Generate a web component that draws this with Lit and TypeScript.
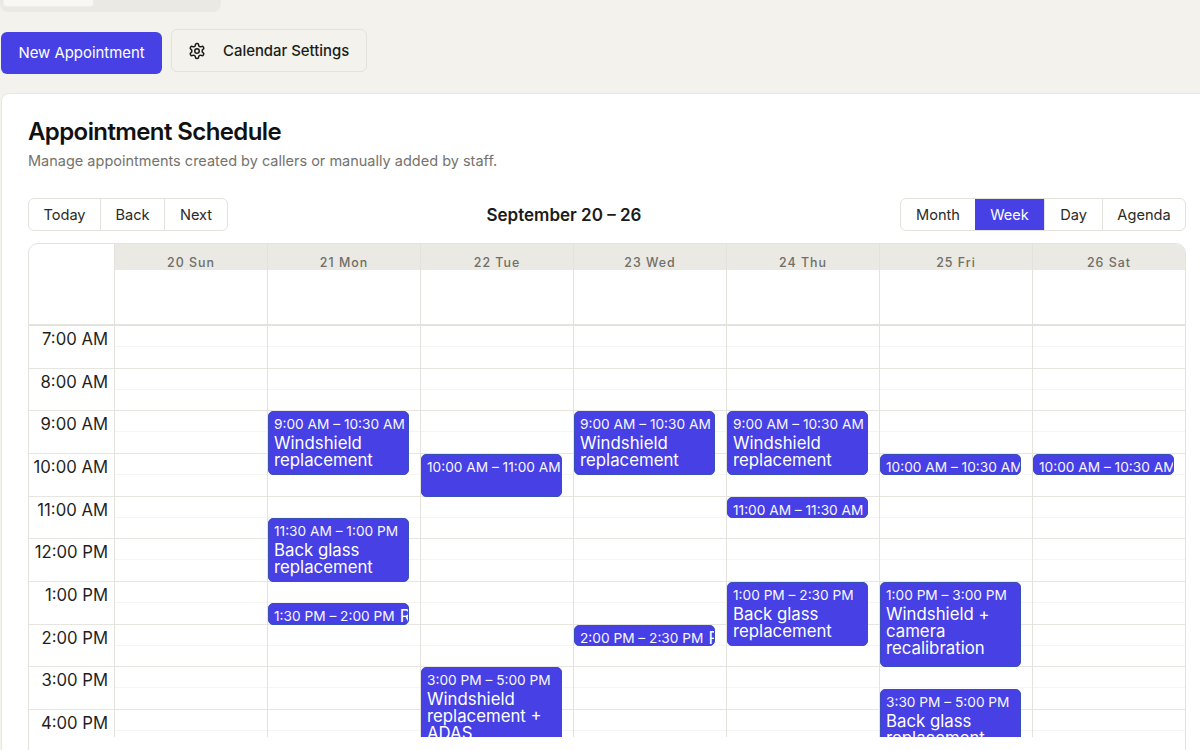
import { LitElement, html, css } from "lit";
import { customElement } from "lit/decorators.js";

const HOUR = 42.66;
const hours = ["7:00 AM","8:00 AM","9:00 AM","10:00 AM","11:00 AM","12:00 PM","1:00 PM","2:00 PM","3:00 PM","4:00 PM"];
const days = ["20 Sun","21 Mon","22 Tue","23 Wed","24 Thu","25 Fri","26 Sat"];
type Ev = { s: number; e: number; t: string; n?: string; short?: boolean };
const BG = "Back glass replacement";
const WR = "Windshield replacement";
const events: Ev[][] = [
  [],
  [
    { s: 9, e: 10.5, t: "9:00 AM – 10:30 AM", n: WR },
    { s: 11.5, e: 13, t: "11:30 AM – 1:00 PM", n: BG },
    { s: 13.5, e: 14, t: "1:30 PM – 2:00 PM", n: "Repair", short: true },
  ],
  [
    { s: 10, e: 11, t: "10:00 AM – 11:00 AM", short: true },
    { s: 15, e: 17, t: "3:00 PM – 5:00 PM", n: "Windshield replacement + ADAS" },
  ],
  [
    { s: 9, e: 10.5, t: "9:00 AM – 10:30 AM", n: WR },
    { s: 14, e: 14.5, t: "2:00 PM – 2:30 PM", n: "Repair", short: true },
  ],
  [
    { s: 9, e: 10.5, t: "9:00 AM – 10:30 AM", n: WR },
    { s: 11, e: 11.5, t: "11:00 AM – 11:30 AM", short: true },
    { s: 13, e: 14.5, t: "1:00 PM – 2:30 PM", n: BG },
  ],
  [
    { s: 10, e: 10.5, t: "10:00 AM – 10:30 AM", short: true },
    { s: 13, e: 15, t: "1:00 PM – 3:00 PM", n: "Windshield + camera recalibration" },
    { s: 15.5, e: 17, t: "3:30 PM – 5:00 PM", n: BG },
  ],
  [{ s: 10, e: 10.5, t: "10:00 AM – 10:30 AM", short: true }],
];

@customElement("app-root")
export class AppRoot extends LitElement {
  static styles = css`
    :host { display: block; width: 1200px; height: 750px; overflow: hidden; background: #f3f2ec; font-family: Inter, "Liberation Sans", sans-serif; color: #1b1b19; }
    * { box-sizing: border-box; }
    .tabs { width: 221px; height: 12px; background: #ebe9e3; border-radius: 0 0 8px 8px; padding-left: 3px; }
    .tab { width: 91px; height: 7px; background: #f8f7f4; border-radius: 0 0 4px 4px; border: 1px solid #efeee9; border-top: none; }
    .actions { display: flex; align-items: flex-start; gap: 9px; height: 81px; padding: 17px 0 0 1px; }
    .primary { margin-top: 3px; width: 161px; height: 42px; background: #4640e5; color: #fff; border: none; border-radius: 6px; font: 400 14.9px Inter, sans-serif; display: flex; align-items: center; justify-content: center; }
    .secondary { width: 196px; height: 43px; border: 1px solid #e3e2dc; border-radius: 6px; background: #f3f2ec; display: flex; align-items: center; padding-left: 16px; gap: 17px; font: 450 14.9px Inter, sans-serif; color: #1b1b19; }
    .card { margin-left: 1px; width: 1215px; height: 670px; background: #fff; border: 1px solid #e8e7e1; border-radius: 8px 0 0 0; padding: 24px 0 0 26px; }
    h1 { margin: 0; font-size: 24px; line-height: 28px; font-weight: 600; letter-spacing: -0.6px; color: #111; }
    .sub { margin: 5px 0 0; font-size: 14.5px; line-height: 20px; color: #74736d; }
    .toolbar { width: 1158px; margin-top: 27px; height: 33px; display: flex; align-items: flex-start; }
    .group { display: flex; flex: none; border: 1px solid #e3e2dc; border-radius: 6px; overflow: hidden; height: 33px; background: #fff; }
    .group span { display: flex; align-items: center; justify-content: center; font-size: 14.6px; border-left: 1px solid #e3e2dc; color: #2a2a27; }
    .group span:first-child { border-left: none; }
    .group span.on { background: #4640e5; color: #fff; border-left: none; }
    .range { flex: 1; text-align: center; line-height: 34px; font-size: 17px; font-weight: 600; color: #1b1b19; }
    .cal { width: 1158px; height: 520px; margin-top: 12px; border: 1px solid #e3e2dc; border-radius: 10px 10px 0 0; overflow: hidden; }
    .clip { height: 493px; overflow: hidden; }
    .head { display: grid; grid-template-columns: 86px repeat(6, 153px) 1fr; height: 82px; border-bottom: 2px solid #e3e2dc; }
    .corner { border-right: 1px solid #e3e2dc; }
    .hcol { border-right: 1px solid #e3e2dc; }
    .hcol:last-child { border-right: none; }
    .hlabel { height: 26px; background: #ebe9e3; text-align: center; font-size: 12.4px; font-weight: 500; letter-spacing: 1px; line-height: 38px; color: #6f6e67; overflow: hidden; }
    .grid { display: grid; grid-template-columns: 86px repeat(6, 153px) 1fr; }
    .gutter { border-right: 1px solid #e3e2dc; }
    .hr { height: ${HOUR}px; border-bottom: 1px solid #e6e5df; }
    .gutter .hr { text-align: right; padding-right: 6px; font-size: 16.7px; line-height: 27px; color: #1f1f1d; }
    .day { position: relative; border-right: 1px solid #e3e2dc; }
    .day:last-child { border-right: none; }
    .half { height: 21px; border-bottom: 1px solid #f6f5f2; }
    .ev { position: absolute; left: 0; width: 141px; background: #4640e5; border: 1px solid #3b50b4; border-radius: 5px; color: #fff; padding: 3px 0 0 5px; overflow: hidden; display: flex; flex-direction: column; }
    .ev.short { flex-direction: row; white-space: nowrap; }
    .time { font-size: 13.7px; line-height: 18px; flex: none; padding-right: 5px; white-space: nowrap; opacity: .96; }
    .title { font-size: 16.8px; line-height: 17px; padding-top: 2px; padding-right: 6px; flex: none; }
    .short .title { padding-top: 0; line-height: 18px; }
  `;

  private gear() {
    return html`<svg width="18" height="18" viewBox="0 0 24 24" fill="none" stroke="#1b1b19" stroke-width="2" stroke-linecap="round" stroke-linejoin="round"><path d="M12.22 2h-.44a2 2 0 0 0-2 2v.18a2 2 0 0 1-1 1.73l-.43.25a2 2 0 0 1-2 0l-.15-.08a2 2 0 0 0-2.73.73l-.22.38a2 2 0 0 0 .73 2.73l.15.1a2 2 0 0 1 1 1.72v.51a2 2 0 0 1-1 1.74l-.15.09a2 2 0 0 0-.73 2.73l.22.38a2 2 0 0 0 2.73.73l.15-.08a2 2 0 0 1 2 0l.43.25a2 2 0 0 1 1 1.73V20a2 2 0 0 0 2 2h.44a2 2 0 0 0 2-2v-.18a2 2 0 0 1 1-1.73l.43-.25a2 2 0 0 1 2 0l.15.08a2 2 0 0 0 2.73-.73l.22-.39a2 2 0 0 0-.73-2.73l-.15-.08a2 2 0 0 1-1-1.74v-.5a2 2 0 0 1 1-1.74l.15-.09a2 2 0 0 0 .73-2.73l-.22-.38a2 2 0 0 0-2.73-.73l-.15.08a2 2 0 0 1-2 0l-.43-.25a2 2 0 0 1-1-1.73V4a2 2 0 0 0-2-2z"/><circle cx="12" cy="12" r="3"/></svg>`;
  }

  private ev(e: Ev) {
    const top = (e.s - 7) * HOUR;
    const h = (e.e - e.s) * HOUR;
    return html`<div class="ev ${e.short ? "short" : ""}" style="top:${top}px;height:${h}px">
      <div class="time">${e.t}</div>${e.n ? html`<div class="title">${e.n}</div>` : ""}
    </div>`;
  }

  render() {
    return html`
      <div class="tabs"><div class="tab"></div></div>
      <div class="actions">
        <button class="primary">New Appointment</button>
        <button class="secondary">${this.gear()}<span>Calendar Settings</span></button>
      </div>
      <div class="card">
        <h1>Appointment Schedule</h1>
        <p class="sub">Manage appointments created by callers or manually added by staff.</p>
        <div class="toolbar">
          <div class="group">
            <span style="width:71px">Today</span><span style="width:64px">Back</span><span style="width:63px">Next</span>
          </div>
          <div class="range">September 20 – 26</div>
          <div class="group">
            <span style="width:74px">Month</span><span class="on" style="width:69px">Week</span><span style="width:58px">Day</span><span style="width:83px">Agenda</span>
          </div>
        </div>
        <div class="cal">
          <div class="clip">
            <div class="head">
              <div class="corner"></div>
              ${days.map((d) => html`<div class="hcol"><div class="hlabel">${d}</div></div>`)}
            </div>
            <div class="grid">
              <div class="gutter">${hours.map((h) => html`<div class="hr">${h}</div>`)}</div>
              ${events.map((list) => html`<div class="day">
                ${hours.map(() => html`<div class="hr"><div class="half"></div></div>`)}
                ${list.map((e) => this.ev(e))}
              </div>`)}
            </div>
          </div>
        </div>
      </div>
    `;
  }
}
